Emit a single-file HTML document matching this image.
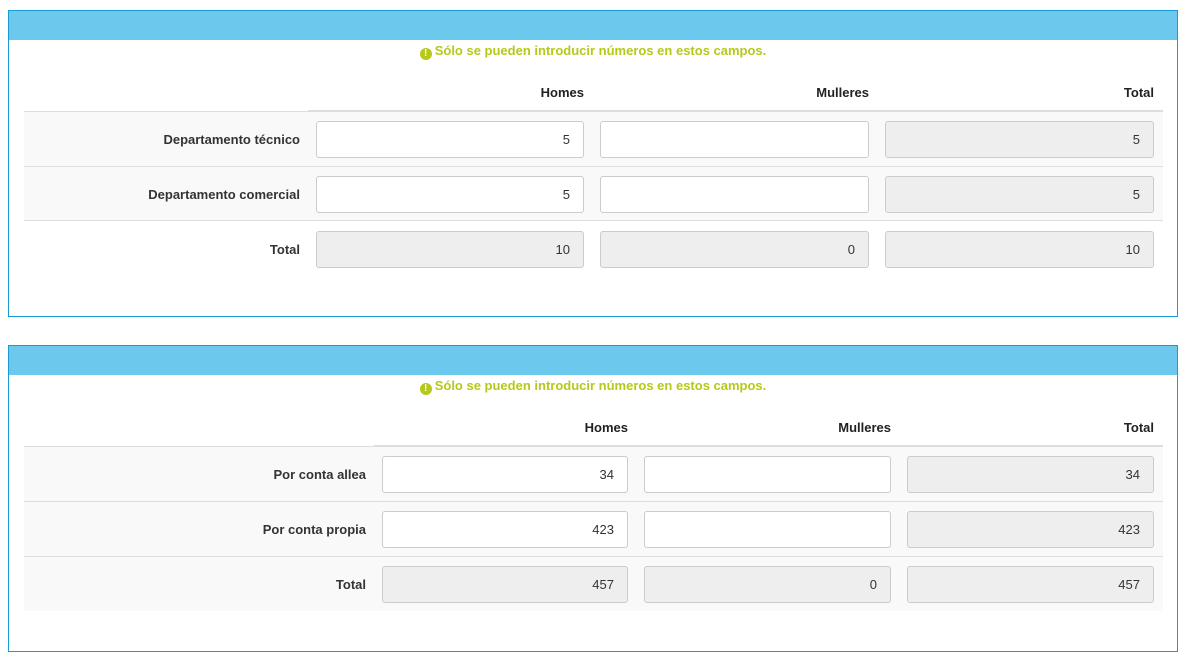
<!DOCTYPE html>
<html><head><meta charset="utf-8"><style>
body{margin:0;width:1189px;height:662px;background:#fff;font-family:"Liberation Sans",sans-serif;position:relative;overflow:hidden}
.p{position:absolute;left:8px;width:1168px;border:1px solid #1a9ad6;background:#fff}
.hd{position:absolute;left:0;right:0;top:0;height:29px;background:#6cc8ec}
.a{position:absolute}
.msg{color:#b5c91a;font-weight:bold;font-size:13px;width:100%;text-align:center}
.ic{display:inline-block;width:12px;height:12px;border-radius:50%;background:#b5c91a;color:#fff;font-size:10px;line-height:12px;text-align:center;vertical-align:-1px;margin-right:3px}
.th{font-weight:bold;font-size:13px;color:#222;text-align:right}
.lb{font-weight:bold;font-size:13px;color:#333;text-align:right}
.in{position:absolute;box-sizing:border-box;height:37px;border:1px solid #ccc;border-radius:3px;background:#fff;font-size:13px;color:#333;text-align:right;padding-right:13px;line-height:35px}
.g{background:#eee}
.row{position:absolute;left:15px;width:1139px;height:55px;box-sizing:border-box;border-top:1px solid #ddd}
</style></head><body>

<div class="p" style="top:10px;height:305px">
<div class="hd"></div>
<div class="a msg" style="top:32px"><span class="ic">!</span>Sólo se pueden introducir números en estos campos.</div>
<div class="a th" style="top:74px;left:400px;width:175px">Homes</div>
<div class="a th" style="top:74px;left:680px;width:180px">Mulleres</div>
<div class="a th" style="top:74px;left:960px;width:185px">Total</div>
<div class="a" style="top:99px;left:299px;width:855px;border-top:2px solid #ddd"></div>
<div class="row" style="top:100px;background:#f9f9f9"></div>
<div class="row" style="top:155px;background:#f9f9f9;border-bottom:1px solid #ddd"></div>
<div class="a lb" style="top:121px;left:20px;width:271px">Departamento técnico</div>
<div class="a lb" style="top:176px;left:20px;width:271px">Departamento comercial</div>
<div class="a lb" style="top:231px;left:20px;width:271px">Total</div>
<div class="in" style="top:110px;left:307px;width:268px">5</div>
<div class="in" style="top:110px;left:591px;width:269px"></div>
<div class="in g" style="top:110px;left:876px;width:269px">5</div>
<div class="in" style="top:165px;left:307px;width:268px">5</div>
<div class="in" style="top:165px;left:591px;width:269px"></div>
<div class="in g" style="top:165px;left:876px;width:269px">5</div>
<div class="in g" style="top:220px;left:307px;width:268px">10</div>
<div class="in g" style="top:220px;left:591px;width:269px">0</div>
<div class="in g" style="top:220px;left:876px;width:269px">10</div>
</div>

<div class="p" style="top:345px;height:305px">
<div class="hd"></div>
<div class="a msg" style="top:32px"><span class="ic">!</span>Sólo se pueden introducir números en estos campos.</div>
<div class="a th" style="top:74px;left:450px;width:169px">Homes</div>
<div class="a th" style="top:74px;left:700px;width:182px">Mulleres</div>
<div class="a th" style="top:74px;left:960px;width:185px">Total</div>
<div class="a" style="top:99px;left:365px;width:789px;border-top:2px solid #ddd"></div>
<div class="row" style="top:100px;background:#f9f9f9"></div>
<div class="row" style="top:155px;background:#f9f9f9"></div>
<div class="row" style="top:210px;background:#f9f9f9"></div>
<div class="a lb" style="top:121px;left:20px;width:337px">Por conta allea</div>
<div class="a lb" style="top:176px;left:20px;width:337px">Por conta propia</div>
<div class="a lb" style="top:231px;left:20px;width:337px">Total</div>
<div class="in" style="top:110px;left:373px;width:246px">34</div>
<div class="in" style="top:110px;left:635px;width:247px"></div>
<div class="in g" style="top:110px;left:898px;width:247px">34</div>
<div class="in" style="top:165px;left:373px;width:246px">423</div>
<div class="in" style="top:165px;left:635px;width:247px"></div>
<div class="in g" style="top:165px;left:898px;width:247px">423</div>
<div class="in g" style="top:220px;left:373px;width:246px">457</div>
<div class="in g" style="top:220px;left:635px;width:247px">0</div>
<div class="in g" style="top:220px;left:898px;width:247px">457</div>
</div>
</body></html>
